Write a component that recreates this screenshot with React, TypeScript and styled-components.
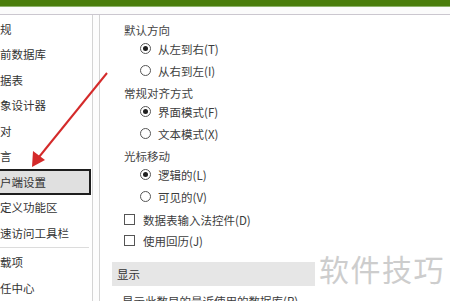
import React from "react";
import styled, { createGlobalStyle } from "styled-components";

const GlobalStyle = createGlobalStyle`
  html, body {
    margin: 0;
    padding: 0;
    background: #ffffff;
  }
  body {
    font-family: "Noto Sans CJK SC", "Noto Sans", sans-serif;
  }
`;

const navItems = [
  "常规",
  "当前数据库",
  "数据表",
  "对象设计器",
  "校对",
  "语言",
  "客户端设置",
  "自定义功能区",
  "快速访问工具栏",
];

const navItemsBottom = ["加载项", "信任中心"];

const Frame = styled.div`
  position: relative;
  width: 450px;
  height: 301px;
  overflow: hidden;
  background: #ffffff;
  display: flex;
  flex-direction: column;
`;

const TitleBar = styled.div`
  height: 6px;
  background: #4a7d0c;
  border-bottom: 1px solid #8db26a;
  flex: none;
`;

const Strip = styled.div`
  height: 7px;
  background: #fbfbfb;
  border-bottom: 1px solid #cbc7cf;
  flex: none;
`;

const Body = styled.div`
  flex: 1;
  display: flex;
  min-height: 0;
`;

const Nav = styled.div`
  width: 92px;
  flex: none;
  border-right: 1px solid #d4d4d4;
  padding-top: 1px;
  overflow: hidden;
`;

const NavItem = styled.div<{ $selected?: boolean }>`
  box-sizing: border-box;
  height: 25.5px;
  margin-right: 1px;
  display: flex;
  align-items: center;
  font-size: 11.5px;
  color: #333333;
  white-space: nowrap;
  text-indent: -11.5px;
  background: ${(p) => (p.$selected ? "#e0e0e0" : "transparent")};
  border: ${(p) => (p.$selected ? "2px solid #1e1e1e" : "2px solid transparent")};
  border-left: none;
`;

const NavSep = styled.div`
  height: 1px;
  width: 89px;
  background: #dcdcdc;
  margin: 1.5px 0 1.5px;
`;

const Gutter = styled.div`
  width: 6px;
  flex: none;
  background: #fdfdfd;
`;

const Content = styled.div`
  flex: 1;
  border-left: 1px solid #d4d4d4;
  padding-top: 3.5px;
  overflow: hidden;
`;

const Heading = styled.div`
  height: 15px;
  margin-top: 4px;
  margin-left: 24px;
  display: flex;
  align-items: center;
  font-size: 11.5px;
  color: #444444;
  white-space: nowrap;
`;

const OptionRow = styled.div<{ $indent: number; $height: number }>`
  height: ${(p) => p.$height}px;
  display: flex;
  align-items: center;
  gap: 7px;
  padding-left: ${(p) => p.$indent}px;
  font-size: 11.5px;
  color: #3c3c3c;
  white-space: nowrap;
`;

const Radio = styled.span<{ $checked?: boolean }>`
  box-sizing: border-box;
  width: 11px;
  height: 11px;
  border-radius: 50%;
  border: 1px solid #555555;
  display: flex;
  align-items: center;
  justify-content: center;
  flex: none;
  &::after {
    content: "";
    width: 5px;
    height: 5px;
    border-radius: 50%;
    background: ${(p) => (p.$checked ? "#1f1f1f" : "transparent")};
  }
`;

const Check = styled.span`
  box-sizing: border-box;
  width: 11px;
  height: 11px;
  border: 1px solid #555555;
  background: #ffffff;
  flex: none;
  margin-right: 1px;
`;

const CheckList = styled.div`
  margin-top: 1.5px;
`;

const SectionBar = styled.div`
  margin: 11px 0 0 12px;
  width: 203px;
  height: 24px;
  background: #e6e6e6;
  display: flex;
  align-items: center;
  padding-left: 5px;
  box-sizing: border-box;
  font-size: 11.5px;
  color: #333333;
`;

const ClippedLine = styled.div`
  margin: 5px 0 0 22px;
  height: 20px;
  display: flex;
  align-items: center;
  font-size: 11.5px;
  color: #3c3c3c;
  white-space: nowrap;
`;

const Watermark = styled.div`
  position: absolute;
  left: 319px;
  top: 246px;
  font-size: 30px;
  letter-spacing: 1.5px;
  color: #cdcdcd;
  white-space: nowrap;
  pointer-events: none;
`;

const ArrowLayer = styled.svg`
  position: absolute;
  left: 0;
  top: 0;
  pointer-events: none;
`;

type Opt = { label: string; checked?: boolean };

const groups: { title: string; options: Opt[] }[] = [
  {
    title: "默认方向",
    options: [{ label: "从左到右(T)", checked: true }, { label: "从右到左(I)" }],
  },
  {
    title: "常规对齐方式",
    options: [{ label: "界面模式(F)", checked: true }, { label: "文本模式(X)" }],
  },
  {
    title: "光标移动",
    options: [{ label: "逻辑的(L)", checked: true }, { label: "可见的(V)" }],
  },
];

const App: React.FC = () => {
  return (
    <>
      <GlobalStyle />
      <Frame>
        <TitleBar />
        <Strip />
        <Body>
          <Nav>
            {navItems.map((n) => (
              <NavItem key={n} $selected={n === "客户端设置"}>
                {n}
              </NavItem>
            ))}
            <NavSep />
            {navItemsBottom.map((n) => (
              <NavItem key={n}>{n}</NavItem>
            ))}
          </Nav>
          <Gutter />
          <Content>
            {groups.map((g) => (
              <div key={g.title}>
                <Heading>{g.title}</Heading>
                {g.options.map((o) => (
                  <OptionRow key={o.label} $indent={40} $height={22}>
                    <Radio $checked={o.checked} />
                    {o.label}
                  </OptionRow>
                ))}
              </div>
            ))}
            <CheckList>
              <OptionRow $indent={24} $height={21}>
                <Check />
                数据表输入法控件(D)
              </OptionRow>
              <OptionRow $indent={24} $height={21}>
                <Check />
                使用回历(J)
              </OptionRow>
            </CheckList>
            <SectionBar>显示</SectionBar>
            <ClippedLine>显示此数目的最近使用的数据库(R)</ClippedLine>
          </Content>
        </Body>
        <Watermark>软件技巧</Watermark>
        <ArrowLayer width="450" height="301" viewBox="0 0 450 301">
          <line x1="107" y1="73" x2="39" y2="157" stroke="#d42a2a" strokeWidth="2" />
          <polygon points="32,167 33,151 45,160" fill="#d42a2a" />
        </ArrowLayer>
      </Frame>
    </>
  );
};

export default App;
